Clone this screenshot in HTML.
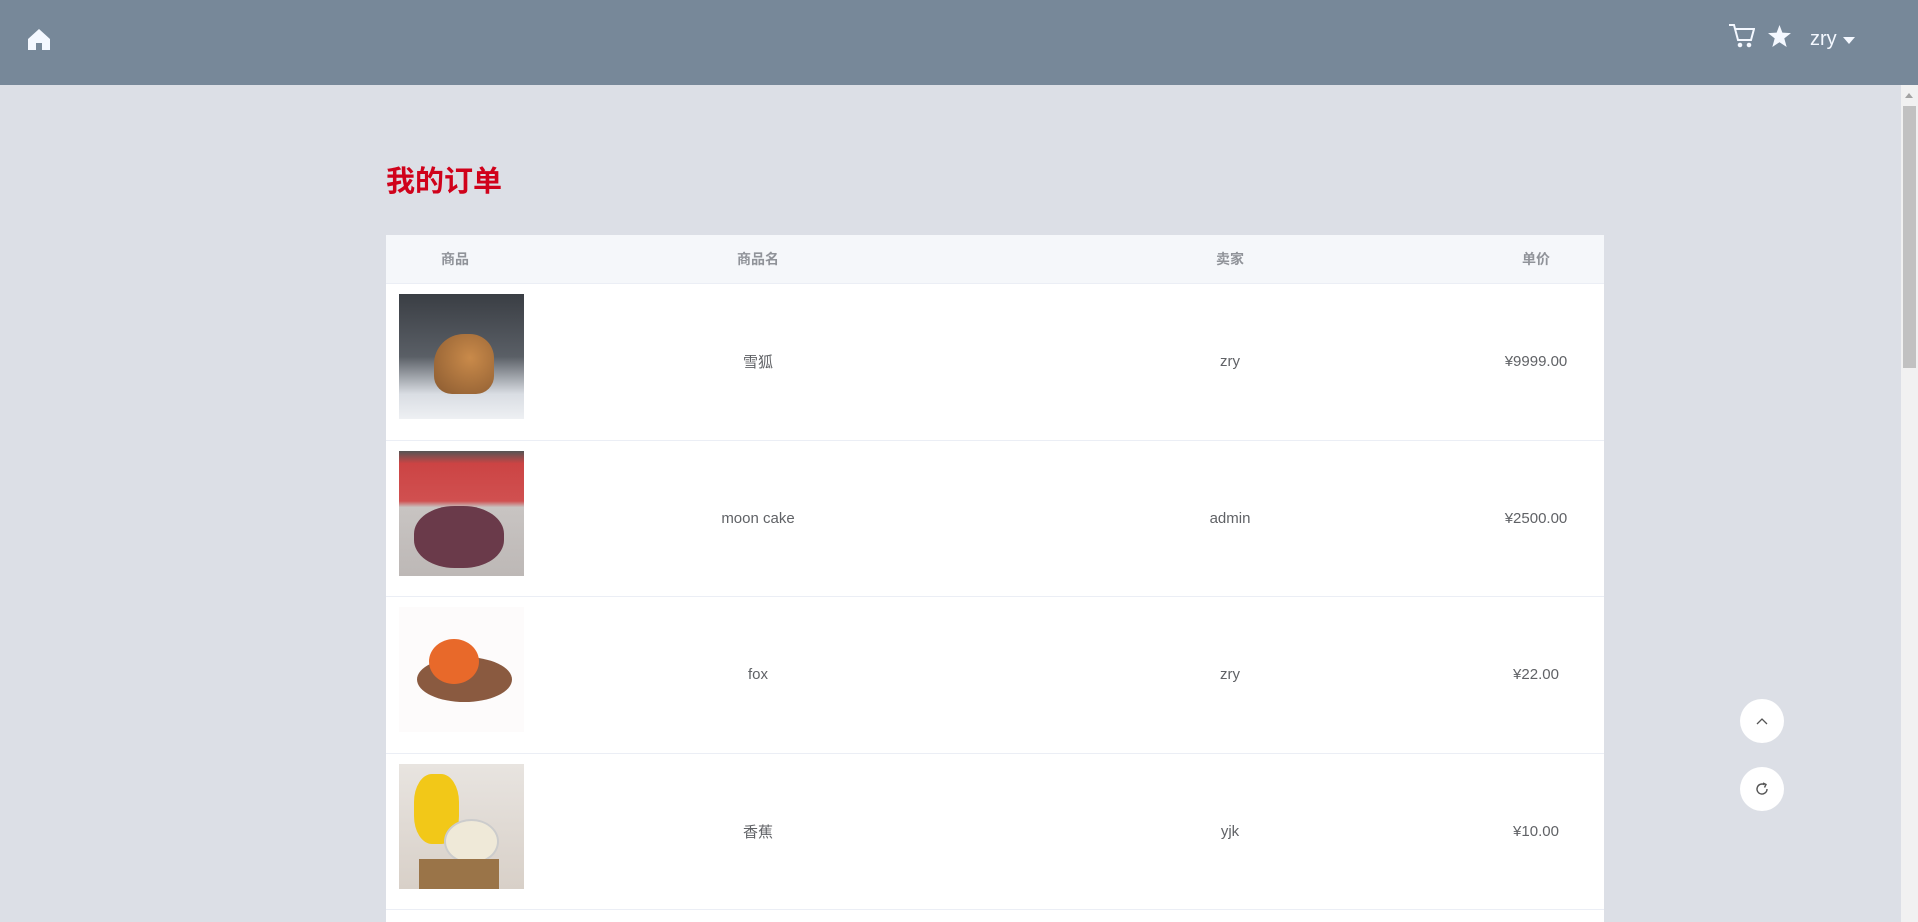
<!DOCTYPE html>
<html><head><meta charset="utf-8"><style>
*{margin:0;padding:0;box-sizing:border-box}
html,body{width:1918px;height:922px;overflow:hidden;background:#dcdfe6;font-family:"Liberation Sans","Noto Sans CJK SC",sans-serif}
.wrap{position:absolute;left:0;top:0;width:1918px;height:922px;overflow:hidden}
.hdr{position:absolute;left:0;top:0;width:1918px;height:85px;background:#778899}
.sb{position:absolute;right:0;top:85px;width:17px;height:837px;background:#f1f1f1}
.sb .th{position:absolute;left:2px;top:21px;width:13px;height:262px;background:#c1c1c1}
.sb .up{position:absolute;left:4px;top:8px;border-left:4px solid transparent;border-right:4px solid transparent;border-bottom:5px solid #a3a3a3}
h1{position:absolute;left:386px;top:158px;font-size:29px;color:#d0021b;font-weight:bold}
.tbl{position:absolute;left:386px;top:235px;width:1218px;height:687px;background:#fff;overflow:hidden}
.row{display:flex;border-bottom:1px solid #ebeef5;height:156.5px;align-items:center;color:#606266;font-size:15px}
.row.h{height:49px;background:#f5f7fa;color:#909399;font-weight:bold;font-size:14px}
.c1{width:138px;text-align:center}.c2{width:468px;text-align:center}.c3{width:476px;text-align:center}.c4{width:136px;text-align:center}
.row:not(.h) .c1{text-align:left;padding-left:13px;align-self:flex-start;padding-top:10px}
.img{width:125px;height:125px;overflow:hidden;position:relative}
.fb{position:absolute;left:1740px;width:44px;height:44px;border-radius:50%;background:#fff;display:flex;align-items:center;justify-content:center}
</style></head><body><div class="wrap">
<div class="hdr">
<svg style="position:absolute;left:28px;top:29px" width="22" height="21" viewBox="0 0 22 21"><path d="M11 0 L22 10 V21 H14 V14 H8 V21 H0 V10 Z" fill="#f4f8ff"/></svg>
<svg style="position:absolute;left:1729px;top:23px" width="26" height="25" viewBox="0 0 26 25" fill="none" stroke="#f4f8ff" stroke-width="2"><path d="M0 2 H5 L9 17 H22 L25 6 H6"/><circle cx="11" cy="22" r="1.3" fill="#f4f8ff"/><circle cx="20" cy="22" r="1.3" fill="#f4f8ff"/></svg>
<svg style="position:absolute;left:1768px;top:25px" width="23" height="22" viewBox="0 0 24 23"><path d="M12 0 L15 8 L24 8.5 L17 14 L19.5 23 L12 18 L4.5 23 L7 14 L0 8.5 L9 8 Z" fill="#f4f8ff"/></svg>
<div style="position:absolute;left:1810px;top:28px;color:#f4f8ff;font-size:20px">zry</div>
<div style="position:absolute;left:1843px;top:37px;border-left:6px solid transparent;border-right:6px solid transparent;border-top:7px solid #f4f8ff"></div>
</div>
<div class="sb"><div class="up"></div><div class="th"></div></div>
<h1>我的订单</h1>
<div class="tbl">
<div class="row h"><div class="c1">商品</div><div class="c2">商品名</div><div class="c3">卖家</div><div class="c4">单价</div></div>
<div class="row"><div class="c1"><div class="img" style="background:linear-gradient(180deg,#3a3e44 0%,#5a5f66 50%,#d9dde3 80%,#eef0f3 100%)"><div style="position:absolute;left:35px;top:40px;width:60px;height:60px;border-radius:50% 40% 30% 30%;background:radial-gradient(circle at 60% 40%,#c98a4a,#8a5a30)"></div></div></div><div class="c2">雪狐</div><div class="c3">zry</div><div class="c4">¥9999.00</div></div>
<div class="row"><div class="c1"><div class="img" style="background:linear-gradient(180deg,#555 0%,#c44 10%,#d05050 40%,#c8c4c2 45%,#bdb8b6 100%)"><div style="position:absolute;left:15px;top:55px;width:90px;height:62px;border-radius:45%;background:#6a3a4a"></div></div></div><div class="c2">moon cake</div><div class="c3">admin</div><div class="c4">¥2500.00</div></div>
<div class="row"><div class="c1"><div class="img" style="background:#fdfbfb"><div style="position:absolute;left:18px;top:50px;width:95px;height:45px;border-radius:50%;background:#8a5a40"></div><div style="position:absolute;left:30px;top:32px;width:50px;height:45px;border-radius:50%;background:#e8692a"></div></div></div><div class="c2">fox</div><div class="c3">zry</div><div class="c4">¥22.00</div></div>
<div class="row"><div class="c1"><div class="img" style="background:linear-gradient(180deg,#e8e4e0,#d8d0c8)"><div style="position:absolute;left:15px;top:10px;width:45px;height:70px;border-radius:40%;background:#f2c818"></div><div style="position:absolute;left:45px;top:55px;width:55px;height:45px;border-radius:50%;background:#efe9d8;border:2px solid #ccc"></div><div style="position:absolute;left:20px;top:95px;width:80px;height:30px;background:#9a7448"></div></div></div><div class="c2">香蕉</div><div class="c3">yjk</div><div class="c4">¥10.00</div></div>
</div>
<div class="fb" style="top:699px"><svg width="14" height="10" viewBox="0 0 14 10" fill="none" stroke="#555" stroke-width="1.3"><path d="M2 8 L7 3 L12 8"/></svg></div>
<div class="fb" style="top:767px"><svg width="14" height="14" viewBox="0 0 14 14" fill="none" stroke="#555" stroke-width="1.4"><path d="M12 7 A5 5 0 1 1 9.5 2.7"/><path d="M8 1 L11 2.5 L9.5 5.5"/></svg></div>
</div></body></html>
